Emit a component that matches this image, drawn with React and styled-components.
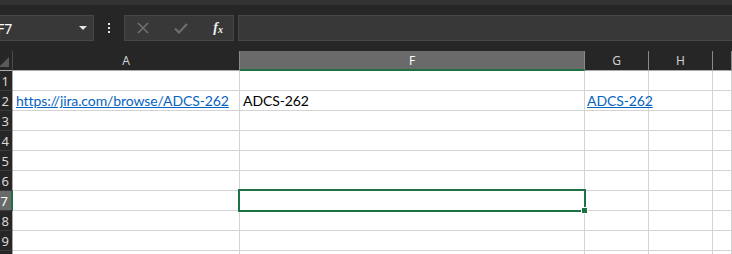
import styled, { createGlobalStyle } from "styled-components";

const GlobalStyle = createGlobalStyle`
  html, body {
    margin: 0;
    padding: 0;
    background: #262626;
    overflow: hidden;
  }
`;

const Window = styled.div`
  width: 732px;
  height: 254px;
  overflow: hidden;
  background: #262626;
  font-family: Lato, "Liberation Sans", Arial, sans-serif;
`;

const TopStrip = styled.div`
  height: 5px;
  background: #333333;
`;

const FormulaBar = styled.div`
  display: flex;
  align-items: center;
  height: 26px;
  margin-top: 10px;
  margin-bottom: 10px;
`;

const Box = styled.div`
  box-sizing: border-box;
  height: 26px;
  background: #383838;
  border: 1px solid #474747;
  display: flex;
  align-items: center;
`;

const NameBox = styled(Box)`
  width: 96px;
  margin-left: -2px;
  padding: 0 6px 0 0;
  justify-content: space-between;
  color: #ffffff;
  font-family: "Noto Sans", "Liberation Sans", sans-serif;
  font-size: 14px;
  border-left: none;
`;

const NameText = styled.span`
  margin-left: -1px;
`;

const Caret = styled.span`
  width: 0;
  height: 0;
  border-left: 4px solid transparent;
  border-right: 4px solid transparent;
  border-top: 4px solid #e6e6e6;
`;

const Dots = styled.div`
  width: 30px;
  display: flex;
  flex-direction: column;
  align-items: center;
  gap: 2px;
  > span {
    width: 2px;
    height: 2px;
    background: #e6e6e6;
  }
`;

const FuncBox = styled(Box)`
  width: 110px;
  padding: 0 10px 0 12px;
  justify-content: space-between;
`;

const Fx = styled.span`
  color: #f2f2f2;
  font-family: "Liberation Serif", serif;
  font-style: italic;
  font-weight: bold;
  font-size: 14px;
  line-height: 1;
  > sub {
    font-size: 10px;
    vertical-align: -1px;
  }
`;

const InputBox = styled(Box)`
  flex: 1;
  margin-left: 4px;
  margin-right: -2px;
`;

const Sheet = styled.div`
  display: grid;
  grid-template-columns: 13px 227px 345px 64px 64px 1fr;
  grid-auto-rows: 20px;
`;

const Corner = styled.div`
  position: relative;
  box-sizing: border-box;
  border-right: 1px solid #4a4a4a;
  border-bottom: 1px solid #ababab;
  overflow: hidden;
  &::after {
    content: "";
    position: absolute;
    right: 3px;
    bottom: 3px;
    width: 0;
    height: 0;
    border-left: 10px solid transparent;
    border-bottom: 10px solid #5a5a5a;
  }
`;

const ColHeader = styled.div`
  box-sizing: border-box;
  display: flex;
  align-items: center;
  justify-content: center;
  font-family: "Noto Sans", "Liberation Sans", sans-serif;
  font-size: 12px;
  color: ${(p) => (p.$active ? "#ffffff" : "#d0d0d0")};
  background: ${(p) => (p.$active ? "#6a6a6a" : "#262626")};
  border-right: 1px solid #8a8a8a;
  border-bottom: ${(p) => (p.$active ? "2px solid #1e7145" : "1px solid #ababab")};
  padding-top: ${(p) => (p.$active ? "1px" : "0")};
`;

const RowHeader = styled.div`
  box-sizing: border-box;
  display: flex;
  align-items: center;
  justify-content: flex-end;
  padding-right: 3px;
  overflow: hidden;
  font-family: "Noto Sans", "Liberation Sans", sans-serif;
  font-size: 13px;
  color: ${(p) => (p.$active ? "#ffffff" : "#d9d9d9")};
  background: ${(p) => (p.$active ? "#6a6a6a" : "#262626")};
  border-bottom: 1px solid #3c3c3c;
  border-right: ${(p) => (p.$active ? "2px solid #1e7145" : "1px solid #ababab")};
`;

const Cell = styled.div`
  position: relative;
  box-sizing: border-box;
  background: #ffffff;
  border-right: 1px solid #d4d4d4;
  border-bottom: 1px solid #d4d4d4;
  display: flex;
  align-items: flex-end;
  padding: 0 0 2px ${(p) => p.$pad || 3}px;
  font-size: 14px;
  line-height: 15px;
  white-space: nowrap;
  color: #000000;
  letter-spacing: -0.1px;

  ${(p) =>
    p.$selected &&
    `
    &::before {
      content: "";
      position: absolute;
      left: -2px;
      top: -2px;
      right: -2px;
      bottom: -2px;
      border: 2px solid #1e7145;
      z-index: 2;
    }
    &::after {
      content: "";
      position: absolute;
      right: -4px;
      bottom: -4px;
      width: 5px;
      height: 5px;
      background: #1e7145;
      border: 1px solid #ffffff;
      z-index: 3;
    }
  `}
`;

const Link = styled.a`
  position: relative;
  z-index: 1;
  color: #0563c1;
  text-decoration: underline;
  text-underline-offset: 1px;
`;

const columns = ["A", "F", "G", "H", ""];

const cells = {
  2: {
    A: <Link href="#">https://jira.com/browse/ADCS-262</Link>,
    F: "ADCS-262",
    G: <Link href="#">ADCS-262</Link>,
  },
};

function XIcon() {
  return (
    <svg width="12" height="12" viewBox="0 0 12 12">
      <path d="M1 1 L11 11 M11 1 L1 11" stroke="#707070" strokeWidth="1.6" fill="none" />
    </svg>
  );
}

function CheckIcon() {
  return (
    <svg width="14" height="11" viewBox="0 0 14 11">
      <path d="M1 5.5 L5 9.5 L13 1" stroke="#707070" strokeWidth="2" fill="none" />
    </svg>
  );
}

export default function App() {
  const rows = [1, 2, 3, 4, 5, 6, 7, 8, 9, 10];
  return (
    <Window>
      <GlobalStyle />
      <TopStrip />
      <FormulaBar>
        <NameBox>
          <NameText>F7</NameText>
          <Caret />
        </NameBox>
        <Dots>
          <span />
          <span />
          <span />
        </Dots>
        <FuncBox>
          <XIcon />
          <CheckIcon />
          <Fx>
            f<sub>x</sub>
          </Fx>
        </FuncBox>
        <InputBox />
      </FormulaBar>
      <Sheet>
        <Corner />
        {columns.map((c, i) => (
          <ColHeader key={i} $active={c === "F"}>
            {c}
          </ColHeader>
        ))}
        {rows.map((r) => [
          <RowHeader key={`h${r}`} $active={r === 7}>
            {r}
          </RowHeader>,
          ...columns.map((c, i) => (
            <Cell
              key={`${r}-${i}`}
              $pad={c === "G" ? 2 : 3}
              $selected={r === 7 && c === "F"}
            >
              {cells[r]?.[c]}
            </Cell>
          )),
        ])}
      </Sheet>
    </Window>
  );
}
